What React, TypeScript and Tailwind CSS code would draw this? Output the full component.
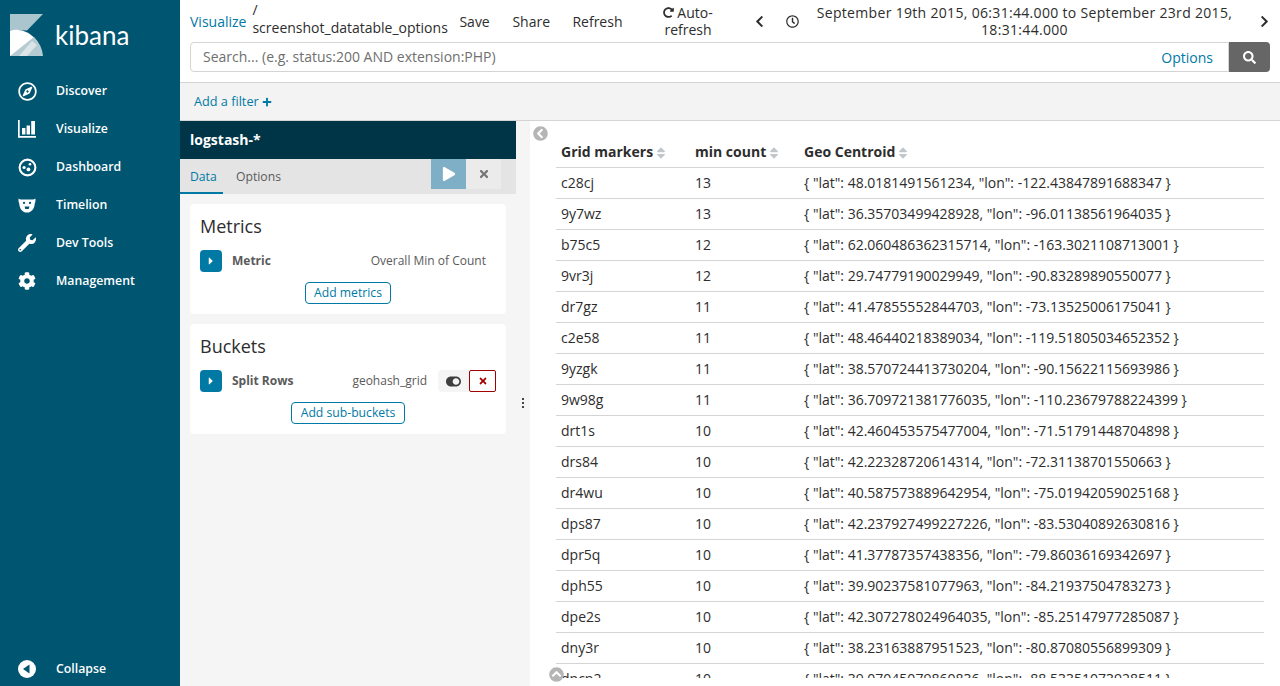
import { FaRegCompass, FaWrench, FaCog, FaPlus, FaTimes, FaSearch, FaChevronLeft, FaChevronRight, FaRedoAlt, FaPlay, FaCaretRight, FaSort, FaRegClock, FaToggleOn, FaChevronCircleLeft, FaChevronCircleUp } from "react-icons/fa";

const font = "font-['Open_Sans',sans-serif]";

const rows = [
  ["c28cj", "13", '{ "lat": 48.0181491561234, "lon": -122.43847891688347 }'],
  ["9y7wz", "13", '{ "lat": 36.35703499428928, "lon": -96.01138561964035 }'],
  ["b75c5", "12", '{ "lat": 62.060486362315714, "lon": -163.3021108713001 }'],
  ["9vr3j", "12", '{ "lat": 29.74779190029949, "lon": -90.83289890550077 }'],
  ["dr7gz", "11", '{ "lat": 41.47855552844703, "lon": -73.13525006175041 }'],
  ["c2e58", "11", '{ "lat": 48.46440218389034, "lon": -119.51805034652352 }'],
  ["9yzgk", "11", '{ "lat": 38.570724413730204, "lon": -90.15622115693986 }'],
  ["9w98g", "11", '{ "lat": 36.709721381776035, "lon": -110.23679788224399 }'],
  ["drt1s", "10", '{ "lat": 42.460453575477004, "lon": -71.51791448704898 }'],
  ["drs84", "10", '{ "lat": 42.22328720614314, "lon": -72.31138701550663 }'],
  ["dr4wu", "10", '{ "lat": 40.587573889642954, "lon": -75.01942059025168 }'],
  ["dps87", "10", '{ "lat": 42.237927499227226, "lon": -83.53040892630816 }'],
  ["dpr5q", "10", '{ "lat": 41.37787357438356, "lon": -79.86036169342697 }'],
  ["dph55", "10", '{ "lat": 39.90237581077963, "lon": -84.21937504783273 }'],
  ["dpe2s", "10", '{ "lat": 42.307278024964035, "lon": -85.25147977285087 }'],
  ["dny3r", "10", '{ "lat": 38.23163887951523, "lon": -80.87080556899309 }'],
  ["dpcp2", "10", '{ "lat": 39.07045079860836, "lon": -88.53351073928511 }'],
];

const DashboardIcon = () => (
  <svg viewBox="0 0 20 20" className="w-[19px] h-[19px]" fill="none">
    <circle cx="10" cy="10" r="8.3" stroke="white" strokeWidth="2.2" />
    <circle cx="6.4" cy="10" r="1.7" fill="white" />
    <circle cx="12.6" cy="6.6" r="1.4" fill="white" />
    <circle cx="11" cy="12" r="2" fill="white" />
  </svg>
);

const BarsIcon = () => (
  <svg viewBox="0 0 18 18" className="w-[18px] h-[18px]" fill="white">
    <path d="M0 0h1.7v16H18v1.7H0z" />
    <path d="M4 8h3.4v6.5H4zM8.6 5.500H12v9H8.600zM13.200 1H17v13.500h-3.800z" />
  </svg>
);

const BearIcon = () => (
  <svg viewBox="0 0 18 16" className="w-[18px] h-[15px]">
    <path fill="white" d="M0 0.500c1 .8 2 1 3.200 1h11.600c1.200 0 2.200-.2 3.200-1 .2 2.200 0 4-.8 5.500 0 5-3.600 9.500-8.200 9.500S.8 11 .8 6C0 4.500-.2 2.700 0 .5z" />
    <circle cx="5.800" cy="5.300" r="1.200" fill="#005571" />
    <circle cx="12.200" cy="5.300" r="1.200" fill="#005571" />
    <path fill="#005571" d="M6.500 9h5l-.6 2.800H7.100z" />
  </svg>
);

const CollapseIcon = () => (
  <svg viewBox="0 0 18 18" className="w-[18px] h-[18px]">
    <circle cx="9" cy="9" r="9" fill="white" />
    <path d="M11.500 4.500v9L5 9z" fill="#005571" />
  </svg>
);

const navItems = [
  { label: "Discover", icon: <FaRegCompass className="text-[19px]" /> },
  { label: "Visualize", icon: <BarsIcon /> },
  { label: "Dashboard", icon: <DashboardIcon /> },
  { label: "Timelion", icon: <BearIcon /> },
  { label: "Dev Tools", icon: <FaWrench className="text-[18px]" /> },
  { label: "Management", icon: <FaCog className="text-[18px]" /> },
];

const NavItem = ({ label, icon }: { label: string; icon: React.ReactNode }) => (
  <div className="h-[38px] flex items-center text-white">
    <span className="w-[56px] pl-[18px] flex items-center">{icon}</span>
    <span className="text-[12.300px] font-semibold">{label}</span>
  </div>
);

const Sidebar = () => (
  <aside className="w-[180px] shrink-0 h-full bg-[#005571] flex flex-col">
    <div className="h-[71px] flex items-start pt-[14px] pl-[10px] shrink-0">
      <svg viewBox="0 0 33 42" className="w-[33px] h-[42px]">
        <path d="M0 0h33L17 16.500Q8 15.500 0 16.500z" fill="#b4cbd3" opacity="0.95" />
        <path d="M0 16.500Q17 13 27.500 28L12 42H0z" fill="#ffffff" />
        <path d="M0 42L24 23Q32 31 33 42z" fill="#b4cbd3" />
        <path d="M9 42L22 27l5 4-10 11z" fill="#dbe5e8" />
      </svg>
      <span className="ml-[12px] mt-[4px] text-white text-[26px] leading-[34px] font-['Lato',sans-serif]">kibana</span>
    </div>
    <nav className="flex flex-col pt-[1px]">
      {navItems.map((item) => (
        <NavItem key={item.label} label={item.label} icon={item.icon} />
      ))}
    </nav>
    <div className="mt-auto h-[34px] flex items-center text-white">
      <span className="w-[56px] pl-[18px]"><CollapseIcon /></span>
      <span className="text-[12.300px] font-semibold">Collapse</span>
    </div>
  </aside>
);

const TopBar = () => (
  <div className="h-[83px] shrink-0 bg-white border-b border-[#d4d4d4] px-[10px]">
    <div className="h-[42px] flex items-center text-[14px] leading-[18px] text-[#2d2d2d]">
      <span className="text-[#0079a5] pt-[1px]">Visualize</span>
      <span className="w-[200px] ml-[6px] shrink-0 -mt-[4px]">
        /<br />screenshot_datatable_options
      </span>
      <span className="ml-[7px] w-[38px] shrink-0 pt-[1px]">Save</span>
      <span className="ml-[15px] w-[46px] shrink-0 pt-[1px]">Share</span>
      <span className="ml-[14px] shrink-0 pt-[1px]">Refresh</span>
      <span className="ml-[33px] w-[65px] shrink-0 text-center leading-[17px]">
        <FaRedoAlt className="inline text-[11px] mr-[3px] -mt-[3px]" />Auto-<br />refresh
      </span>
      <FaChevronLeft className="ml-[33px] text-[13px] shrink-0" />
      <FaRegClock className="ml-[20px] text-[13px] shrink-0" />
      <span className="w-[440px] ml-[5px] shrink-0 text-center leading-[17px] tracking-[0.32px]">
        September 19th 2015, 06:31:44.000 to
        September 23rd 2015, 18:31:44.000
      </span>
      <FaChevronRight className="ml-[14px] text-[13px] shrink-0" />
    </div>
    <div className="h-[30px] flex">
      <div className="flex-1 flex items-center justify-between border border-[#d4d4d4] rounded-l-[4px] pl-[12px] pr-[15px]">
        <span className="text-[14px] text-[#6f6f6f] -mt-[1px]">Search... (e.g. status:200 AND extension:PHP)</span>
        <span className="text-[14px] text-[#0079a5]">Options</span>
      </div>
      <div className="w-[41px] bg-[#666666] rounded-r-[4px] flex items-center justify-center text-white">
        <FaSearch className="text-[13px]" />
      </div>
    </div>
  </div>
);

const FilterBar = () => (
  <div className="h-[38px] shrink-0 bg-[#f3f3f3] border-b border-[#d4d4d4] pl-[14px] flex items-center text-[12.700px] text-[#0079a5]">
    Add a filter <FaPlus className="ml-[3px] text-[10px]" />
  </div>
);

const ExpandButton = () => (
  <span className="w-[22px] h-[22px] shrink-0 rounded-[4px] bg-[#0079a5] flex items-center justify-center text-white">
    <FaCaretRight className="text-[12px]" />
  </span>
);

const AddButton = ({ label }: { label: string }) => (
  <div className="flex justify-center">
    <span className="h-[22px] px-[8.500px] border border-[#0079a5] rounded-[4px] text-[12.200px] leading-[20px] text-[#0079a5]">{label}</span>
  </div>
);

const EditorPanel = () => (
  <div className="w-[350px] shrink-0 bg-[#f5f5f5] flex">
    <div className="w-[336px] shrink-0 flex flex-col">
      <div className="h-[38px] bg-[#003547] pl-[10px] pb-[1px] flex items-center text-white text-[14px] font-bold">logstash-*</div>
      <div className="h-[35px] bg-[#e4e4e4] flex text-[12.200px] relative">
        <span className="w-[43px] pl-[10px] pt-[9px] text-[#0079a5] border-b-[2px] border-[#0079a5]">Data</span>
        <span className="pl-[13px] pt-[9px] text-[#5a5a5a]">Options</span>
        <div className="ml-auto mr-[15px] flex h-[30px]">
          <span className="w-[35px] bg-[#7fafc6] flex items-center justify-center text-white"><FaPlay className="text-[14px]" /></span>
          <span className="w-[35px] bg-[#ebebeb] flex items-center justify-center text-[#777777]"><FaTimes className="text-[12px]" /></span>
        </div>
      </div>
      <div className="px-[10px] pt-[10px] flex flex-col gap-[10px]">
        <section className="h-[110px] bg-white rounded-[4px] pt-[10px] px-[10px]">
          <h2 className="text-[18px] leading-[25px] text-[#2d2d2d]">Metrics</h2>
          <div className="flex items-center h-[22px] mt-[11px] text-[12px] text-[#5a5a5a]">
            <ExpandButton />
            <span className="ml-[10px] font-bold">Metric</span>
            <span className="ml-auto pr-[10px]">Overall Min of Count</span>
          </div>
          <div className="mt-[10px]"><AddButton label="Add metrics" /></div>
        </section>
        <section className="h-[110px] bg-white rounded-[4px] pt-[10px] px-[10px]">
          <h2 className="text-[18px] leading-[25px] text-[#2d2d2d]">Buckets</h2>
          <div className="flex items-center h-[22px] mt-[11px] text-[12px] text-[#5a5a5a]">
            <ExpandButton />
            <span className="ml-[10px] font-bold">Split Rows</span>
            <span className="ml-auto pr-[11px]">geohash_grid</span>
            <span className="w-[31px] h-[22px] bg-[#f5f5f5] rounded-l-[4px] flex items-center justify-center text-[#3f3f3f]"><FaToggleOn className="text-[15px]" /></span>
            <span className="w-[27px] h-[22px] border border-[#a30000] rounded-[2px] flex items-center justify-center text-[#a30000]"><FaTimes className="text-[10px]" /></span>
          </div>
          <div className="mt-[10px]"><AddButton label="Add sub-buckets" /></div>
        </section>
      </div>
    </div>
    <div className="flex-1 relative">
      <span className="absolute top-[277px] left-[6px] flex flex-col gap-[2px]">
        <i className="w-[2px] h-[2px] bg-[#444444] block" />
        <i className="w-[2px] h-[2px] bg-[#444444] block" />
        <i className="w-[2px] h-[2px] bg-[#444444] block" />
      </span>
    </div>
  </div>
);

const HeaderCell = ({ label, className }: { label: string; className: string }) => (
  <th className={`${className} text-left font-bold text-[14px] text-[#2d2d2d] p-0 pl-[5px]`}>
    {label}
    <FaSort className="inline ml-[1px] text-[14px] text-[#c0c6ca] -mt-[2px]" />
  </th>
);

const ResultsTable = () => (
  <div className="flex-1 min-w-0 bg-white relative overflow-hidden">
    <FaChevronCircleLeft className="absolute left-[3px] top-[5px] text-[15px] text-[#b5b5b5]" />
    <div className="ml-[26px] mr-[16px] mt-[16px] h-[541px] overflow-hidden">
      <table className="w-full border-collapse table-fixed">
        <thead>
          <tr className="h-[30px] border-b border-[#d4d4d4]">
            <HeaderCell label="Grid markers" className="w-[134px]" />
            <HeaderCell label="min count" className="w-[109px]" />
            <HeaderCell label="Geo Centroid" className="" />
          </tr>
        </thead>
        <tbody>
          {rows.map((row) => (
            <tr key={row[0]} className="h-[31px] border-b border-[#d4d4d4] text-[14px] text-[#2d2d2d]">
              <td className="p-0 pl-[5px]">{row[0]}</td>
              <td className="p-0 pl-[5px]">{row[1]}</td>
              <td className="p-0 pl-[5px]">{row[2]}</td>
            </tr>
          ))}
        </tbody>
      </table>
    </div>
    <FaChevronCircleUp className="absolute left-[19px] top-[546px] text-[15px] text-[#b5b5b5] z-10" />
  </div>
);

export default function App() {
  return (
    <div className={`${font} w-[1280px] h-[686px] flex overflow-hidden bg-white`}>
      <Sidebar />
      <main className="flex-1 min-w-0 flex flex-col">
        <TopBar />
        <FilterBar />
        <div className="flex-1 min-h-0 flex">
          <EditorPanel />
          <ResultsTable />
        </div>
      </main>
    </div>
  );
}
